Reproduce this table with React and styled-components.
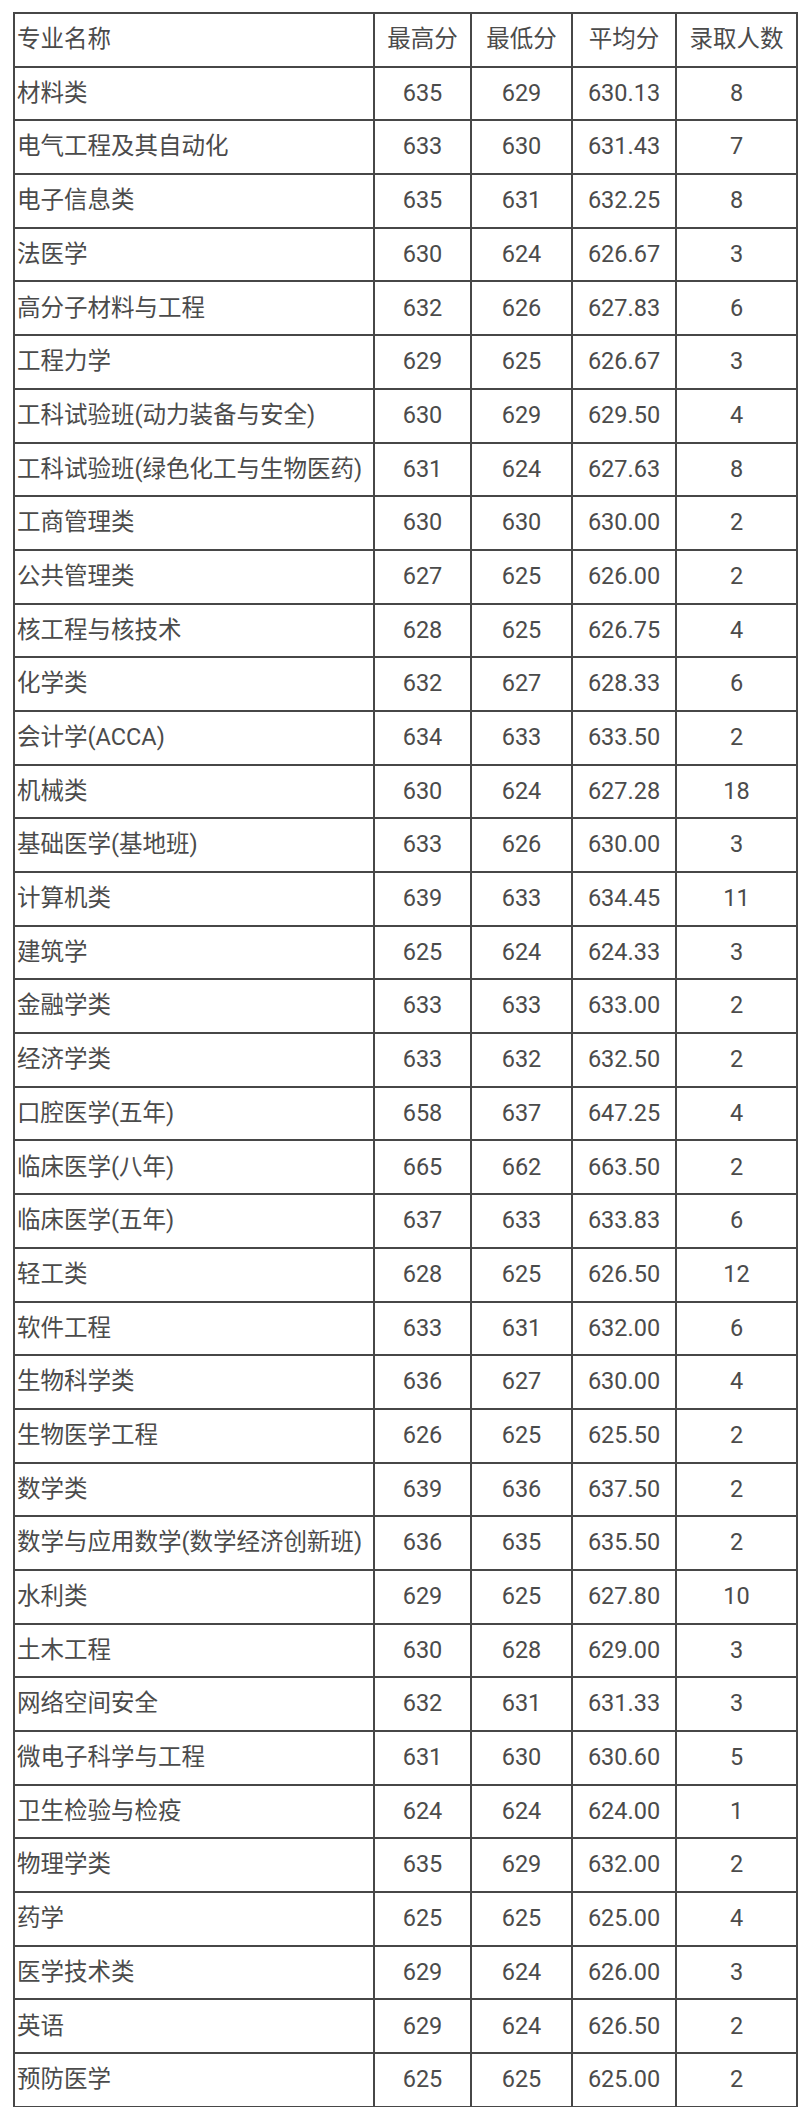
import React from "react";
import styled, { createGlobalStyle } from "styled-components";

const GlobalStyle = createGlobalStyle`
  html, body {
    margin: 0;
    padding: 0;
    background: #fff;
  }
`;

const rows = [
  ["材料类", "635", "629", "630.13", "8"],
  ["电气工程及其自动化", "633", "630", "631.43", "7"],
  ["电子信息类", "635", "631", "632.25", "8"],
  ["法医学", "630", "624", "626.67", "3"],
  ["高分子材料与工程", "632", "626", "627.83", "6"],
  ["工程力学", "629", "625", "626.67", "3"],
  ["工科试验班(动力装备与安全)", "630", "629", "629.50", "4"],
  ["工科试验班(绿色化工与生物医药)", "631", "624", "627.63", "8"],
  ["工商管理类", "630", "630", "630.00", "2"],
  ["公共管理类", "627", "625", "626.00", "2"],
  ["核工程与核技术", "628", "625", "626.75", "4"],
  ["化学类", "632", "627", "628.33", "6"],
  ["会计学(ACCA)", "634", "633", "633.50", "2"],
  ["机械类", "630", "624", "627.28", "18"],
  ["基础医学(基地班)", "633", "626", "630.00", "3"],
  ["计算机类", "639", "633", "634.45", "11"],
  ["建筑学", "625", "624", "624.33", "3"],
  ["金融学类", "633", "633", "633.00", "2"],
  ["经济学类", "633", "632", "632.50", "2"],
  ["口腔医学(五年)", "658", "637", "647.25", "4"],
  ["临床医学(八年)", "665", "662", "663.50", "2"],
  ["临床医学(五年)", "637", "633", "633.83", "6"],
  ["轻工类", "628", "625", "626.50", "12"],
  ["软件工程", "633", "631", "632.00", "6"],
  ["生物科学类", "636", "627", "630.00", "4"],
  ["生物医学工程", "626", "625", "625.50", "2"],
  ["数学类", "639", "636", "637.50", "2"],
  ["数学与应用数学(数学经济创新班)", "636", "635", "635.50", "2"],
  ["水利类", "629", "625", "627.80", "10"],
  ["土木工程", "630", "628", "629.00", "3"],
  ["网络空间安全", "632", "631", "631.33", "3"],
  ["微电子科学与工程", "631", "630", "630.60", "5"],
  ["卫生检验与检疫", "624", "624", "624.00", "1"],
  ["物理学类", "635", "629", "632.00", "2"],
  ["药学", "625", "625", "625.00", "4"],
  ["医学技术类", "629", "624", "626.00", "3"],
  ["英语", "629", "624", "626.50", "2"],
  ["预防医学", "625", "625", "625.00", "2"],
];

const headers = ["专业名称", "最高分", "最低分", "平均分", "录取人数"];
const widths = [360, 97, 101, 104, 121];

const Page = styled.div`
  padding: 12px 0 0 13px;
`;

const Table = styled.table`
  border-collapse: collapse;
  table-layout: fixed;
  width: 785px;
  font-family: Roboto, "Noto Sans CJK SC", sans-serif;
  font-size: 23.5px;
  color: #4b4b4b;
`;

const Row = styled.tr`
  height: 53.7px;
`;

const Cell = styled.td`
  border: 2px solid #474747;
  padding: 0 2px;
  text-align: ${(p) => (p.$left ? "left" : "center")};
  vertical-align: middle;
  white-space: nowrap;
  overflow: hidden;
  line-height: 1;
`;

export default function App() {
  return (
    <Page>
      <GlobalStyle />
      <Table>
        <colgroup>
          {widths.map((w, i) => (
            <col key={i} style={{ width: w }} />
          ))}
        </colgroup>
        <tbody>
          <Row>
            {headers.map((h, i) => (
              <Cell key={h} $left={i === 0}>
                {h}
              </Cell>
            ))}
          </Row>
          {rows.map((r) => (
            <Row key={r[0]}>
              {r.map((v, i) => (
                <Cell key={i} $left={i === 0}>
                  {v}
                </Cell>
              ))}
            </Row>
          ))}
        </tbody>
      </Table>
    </Page>
  );
}
